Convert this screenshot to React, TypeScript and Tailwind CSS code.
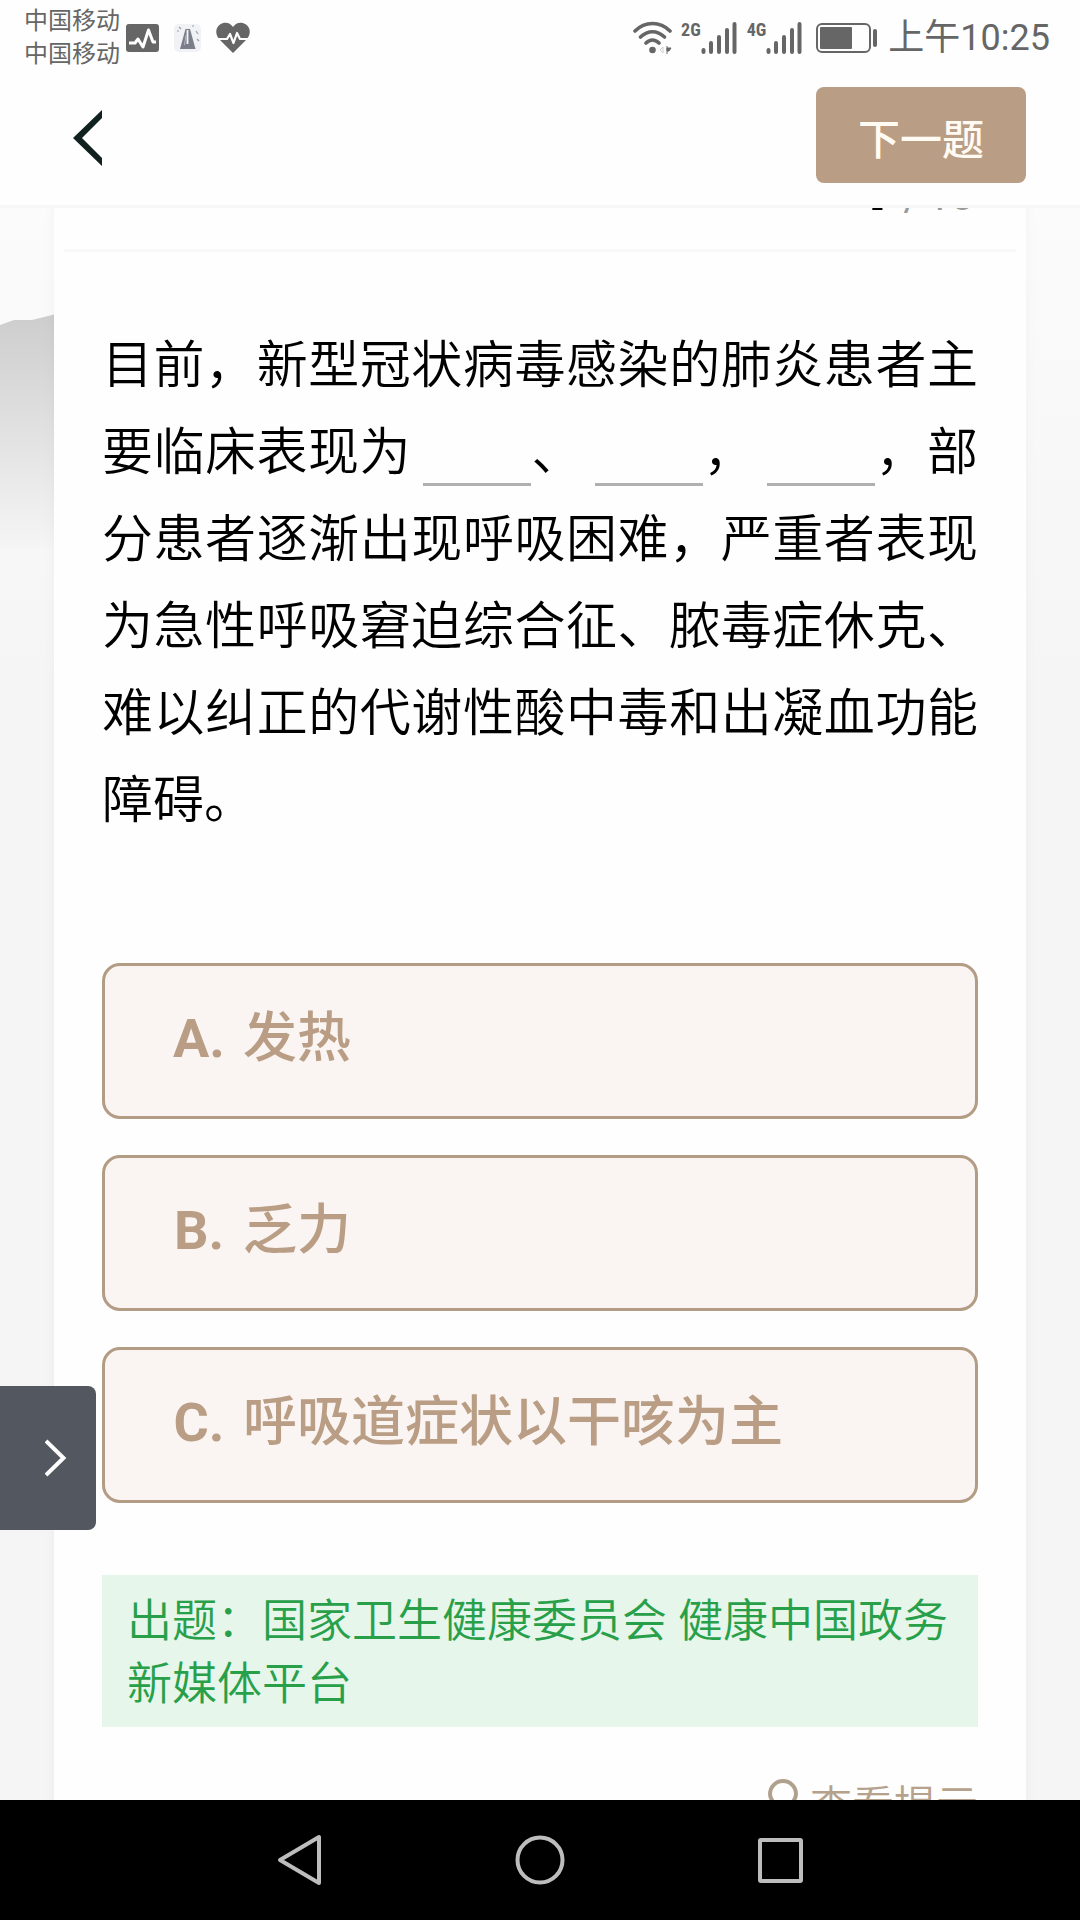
import { useState } from "react";

const opcoes = [
  { letra: "A", texto: "发热" },
  { letra: "B", texto: "乏力" },
  { letra: "C", texto: "呼吸道症状以干咳为主" },
];

function SignalBars() {
  return (
    <svg width="36" height="34" viewBox="0 0 36 34" stroke="#666" strokeWidth="4" strokeLinecap="round">
      <path d="M2.5 29V31M10 22V31M18 16V31M26 9V31M33.500 3V31" />
    </svg>
  );
}

function Signal({ rede }: { rede: string }) {
  return (
    <div className="flex items-start">
      <span className="text-[18px] leading-[18px] font-bold font-['Liberation_Sans_Narrow','Roboto_Condensed',Roboto,sans-serif]">
        {rede}
      </span>
      <SignalBars />
    </div>
  );
}

function StatusBar() {
  return (
    <div className="flex h-[72px] shrink-0 items-center justify-between pt-1 pr-[30px] pl-6 text-[#666]">
      <div className="flex items-center">
        <div className="text-[24px] leading-[33px]">
          <div>中国移动</div>
          <div>中国移动</div>
        </div>
        <svg className="ml-1.5" width="34" height="28" viewBox="0 0 34 28" fill="none">
          <rect width="33" height="28" rx="3" fill="#666" />
          <path d="M3 19H9L12 15L17 23L22.500 6L27 18H30" stroke="#fff" strokeWidth="3" strokeLinejoin="round" />
        </svg>
        <svg className="ml-3" width="32" height="32" viewBox="0 0 32 32">
          <rect x="2" y="2" width="27" height="28" rx="5" fill="#f1f2f6" />
          <path d="M13.500 7H18L23.500 27H8Z" fill="#7b7e89" />
          <path d="M15.500 8V22" stroke="#f5f5fa" strokeWidth="1.800" />
          <path d="M12.500 23L14 13" stroke="#b5b7c0" strokeWidth="1" />
          <path d="M7 5L9 7M5 9H7M20 4H22M24 9L26 12M25 17L27 19" stroke="#9a9ca8" strokeWidth="1.200" />
        </svg>
        <svg className="ml-3" width="34" height="32" viewBox="0 0 34 32" fill="none">
          <path d="M17 31L4 18C-1 13 -1 6 4 2.500C8 -.500 14 0 17 5C20 0 26 -.500 30 2.500C35 6 35 13 30 18Z" fill="#666" />
          <path d="M0 17H11L14 12L17.500 21L21 11L24 17H34" stroke="#fff" strokeWidth="2.200" strokeLinejoin="round" />
        </svg>
      </div>

      <div className="flex items-center">
        <svg className="mr-2" width="40" height="34" viewBox="0 0 40 34" fill="none">
          <path d="M2 10C12 0 27 0 37 10M7.500 16C15 9 24 9 31.500 16M13 22C17 18 22 18 26 22" stroke="#666" strokeWidth="3.600" strokeLinecap="round" />
          <circle cx="19.500" cy="29" r="3.300" fill="#666" />
          <path d="M30 26V32L27 29Z" stroke="#ccc" />
          <path d="M34 25V33M34 27H38L36 30H34Z" fill="#666" stroke="#666" />
        </svg>
        <Signal rede="2G" />
        <div className="ml-2.5">
          <Signal rede="4G" />
        </div>
        <svg className="ml-3.5" width="62" height="30" viewBox="0 0 62 30" fill="none">
          <rect x="1" y="1" width="53" height="28" rx="5" stroke="#666" strokeWidth="2" />
          <rect x="4" y="4" width="32" height="22" rx="1" fill="#666" />
          <rect x="57" y="6" width="4" height="18" rx="2" fill="#666" />
        </svg>
        <span className="ml-2.5 text-[36px] leading-[44px]">上午10:25</span>
      </div>
    </div>
  );
}

function Lacuna() {
  return <span className="ml-3 inline-block h-[58px] w-[108px] border-b-[3px] border-[#b0b0b0] align-middle" />;
}

export default function App() {
  const [selecionada, setSelecionada] = useState<string | null>(null);

  return (
    <div className="flex h-screen flex-col overflow-hidden bg-white font-['Roboto','Noto_Sans_CJK_SC',sans-serif]">
      <div className="relative z-10 shrink-0 bg-[#fefefe]">
        <StatusBar />
        <header className="flex h-[136px] items-start justify-between border-b-[3px] border-[#f7f7f7] pt-[15px] pr-[54px] pl-[72px]">
          <button type="button" aria-label="返回" className="flex h-24 items-center pt-1.5">
            <svg width="32" height="58" viewBox="0 0 32 58" fill="none">
              <path d="M30 1V9L10 29L30 49V57L1 29Z" fill="#10211f" />
            </svg>
          </button>
          <button
            type="button"
            className="h-24 w-[210px] rounded-lg bg-[#b99d84] pt-2.5 text-[42px] font-medium text-[#fffaf2]"
          >
            下一题
          </button>
        </header>
      </div>

      <main className="relative min-h-0 flex-1 overflow-hidden bg-linear-to-b from-[#fbfbfb] to-[#f5f5f5] to-30% px-[54px]">
        {/* Montanha de fundo */}
        <svg className="absolute top-[100px] left-0" width="60" height="240" viewBox="0 0 60 240">
          <defs>
            <linearGradient id="montanha" x1="0" y1="0" x2="0" y2="1">
              <stop offset="0" stopColor="#cdcdcd" />
              <stop offset="1" stopColor="#f5f5f5" />
            </linearGradient>
          </defs>
          <path d="M0 17L14 12H32L60 5V240H0Z" fill="url(#montanha)" />
        </svg>

        <div className="relative -mt-[60px] bg-[#fefefe] pb-24 shadow-[0_0_12px_rgba(0,0,0,0.04)]">
          {/* Contador, parcialmente atrás do cabeçalho */}
          <div className="mx-2.5 flex h-[104px] items-start justify-end border-b-[3px] border-[#f8f8f8] pr-[42px]">
            <p className="text-[42px] leading-[76px] text-[#999]">
              <span className="mr-2 text-[72px] font-bold text-black">1</span>
              <span className="mr-1.5">/</span>
              10
            </p>
          </div>

          <div className="px-12 pt-[70px]">
            <p className="text-justify text-[51px] leading-[87px] font-[350] text-black">
              目前，新型冠状病毒感染的肺炎患者主要临床表现为
              <Lacuna />、<Lacuna />，<Lacuna />
              ，部分患者逐渐出现呼吸困难，严重者表现为急性呼吸窘迫综合征、脓毒症休克、难以纠正的代谢性酸中毒和出凝血功能障碍。
            </p>

            {/* Opções */}
            <div className="mt-[119px] flex flex-col gap-9">
              {opcoes.map((opcao) => (
                <button
                  key={opcao.letra}
                  type="button"
                  aria-pressed={selecionada === opcao.letra}
                  onClick={() => setSelecionada(opcao.letra)}
                  className="flex h-[156px] items-center gap-[18px] rounded-[18px] border-[3px] border-[#b29d84] bg-[#faf5f2] px-[68px] pb-1 text-left text-[54px] leading-[64px] font-medium text-[#b99d84]"
                >
                  <span className="w-[52px] text-center font-bold">{opcao.letra}.</span>
                  <span>{opcao.texto}</span>
                </button>
              ))}
            </div>

            <p className="mt-[72px] bg-[#e6f6eb] px-[25px] pt-[15px] pb-[11px] text-[45px] leading-[63px] font-[350] text-[#28a04a]">
              出题：国家卫生健康委员会 健康中国政务新媒体平台
            </p>

            <div className="mt-[52px] flex justify-end">
              <button type="button" className="flex items-start gap-3 text-[42px] leading-[56px] font-[350] text-[#b5a18c]">
                <svg width="30" height="44" viewBox="0 0 30 44" fill="none" stroke="#b0a18f" strokeWidth="4">
                  <path d="M9 29C9 26 2 22 2 15A13 13 0 0 1 28 15C28 22 21 26 21 29V34H9Z" />
                  <path d="M10 40H20" />
                </svg>
                查看提示
              </button>
            </div>
          </div>
        </div>

        <button
          type="button"
          aria-label="展开"
          className="absolute bottom-[270px] left-0 flex h-36 w-24 items-center justify-end rounded-r-lg bg-[#53575f] pr-[29px]"
        >
          <svg width="22" height="38" viewBox="0 0 22 38" fill="none">
            <path d="M1 2L18.500 19L1 36" stroke="#fff" strokeWidth="4" />
          </svg>
        </button>
      </main>

      <nav className="flex h-[120px] shrink-0 items-center justify-center gap-[190px] bg-black">
        <button type="button" aria-label="后退">
          <svg width="50" height="52" viewBox="0 0 50 52" fill="none">
            <path d="M44 3V49L5 26Z" stroke="#bdbdbd" strokeWidth="4" strokeLinejoin="round" />
          </svg>
        </button>
        <button type="button" aria-label="主页">
          <svg width="50" height="52" viewBox="0 0 50 52" fill="none">
            <circle cx="25" cy="26" r="22.500" stroke="#bdbdbd" strokeWidth="4" />
          </svg>
        </button>
        <button type="button" aria-label="最近任务">
          <svg width="50" height="52" viewBox="0 0 50 52" fill="none">
            <rect x="5" y="6" width="41" height="41" rx="1" stroke="#bdbdbd" strokeWidth="4" />
          </svg>
        </button>
      </nav>
    </div>
  );
}
